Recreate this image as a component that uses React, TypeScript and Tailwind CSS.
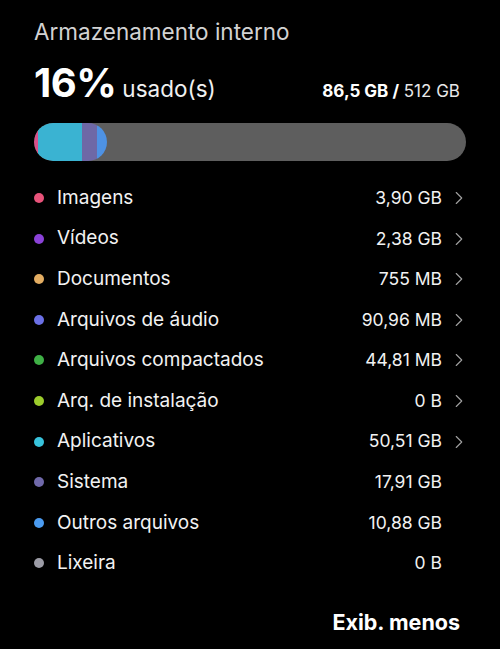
import { ChevronRight } from 'lucide-react';

interface Row {
    label: string;
    value: string;
    dot: string;
    chevron: boolean;
}

const rows: Row[] = [
    { label: 'Imagens', value: '3,90 GB', dot: 'bg-[#e8537a]', chevron: true },
    { label: 'Vídeos', value: '2,38 GB', dot: 'bg-[#8b42d8]', chevron: true },
    { label: 'Documentos', value: '755 MB', dot: 'bg-[#e3ad62]', chevron: true },
    { label: 'Arquivos de áudio', value: '90,96 MB', dot: 'bg-[#6b70e6]', chevron: true },
    { label: 'Arquivos compactados', value: '44,81 MB', dot: 'bg-[#3fb046]', chevron: true },
    { label: 'Arq. de instalação', value: '0 B', dot: 'bg-[#9ccc2c]', chevron: true },
    { label: 'Aplicativos', value: '50,51 GB', dot: 'bg-[#38c3dc]', chevron: true },
    { label: 'Sistema', value: '17,91 GB', dot: 'bg-[#7069aa]', chevron: false },
    { label: 'Outros arquivos', value: '10,88 GB', dot: 'bg-[#4b9bf0]', chevron: false },
    { label: 'Lixeira', value: '0 B', dot: 'bg-[#9c9ca6]', chevron: false },
];

export default function App() {
    return (
        <div className="w-[500px] h-[649px] bg-black text-white font-['Inter',sans-serif] px-[34px] pt-[16px]">
            {/* Header */}
            <h1 className="text-[22.5px] text-[#d2d2d2] leading-[32px]">Armazenamento interno</h1>
            <div className="flex items-baseline justify-between mt-[15px]">
                <div className="flex items-baseline gap-[6px]">
                    <span className="text-[40px] font-bold leading-[40px] tracking-[-0.5px]">16%</span>
                    <span className="text-[22.5px] text-[#f0f0f0]">usado(s)</span>
                </div>
                <div className="text-[17px] pr-[6px]">
                    <span className="font-bold">86,5 GB /</span> <span className="text-[#e8e8e8]">512 GB</span>
                </div>
            </div>

            {/* Usage bar */}
            <div className="mt-[17px] h-[38px] w-[432px] rounded-full bg-[#5e5e5e] overflow-hidden">
                <div className="flex h-full w-[73px] rounded-full overflow-hidden">
                    <div className="w-[4px] bg-[#d9508a]" />
                    <div className="w-[44px] bg-[#3ab3d2]" />
                    <div className="w-[15px] bg-[#6e68a6]" />
                    <div className="w-[10px] bg-[#4e92e4]" />
                </div>
            </div>

            {/* Categories */}
            <ul className="mt-[17px]">
                {rows.map((row) => (
                    <li key={row.label} className="flex items-center h-[40.6px]">
                        <span className={`w-[10px] h-[10px] rounded-full ${row.dot}`} />
                        <span className="ml-[13px] text-[19px] text-[#f2f2f2]">{row.label}</span>
                        <span className="ml-auto text-[17.5px] text-[#f2f2f2]">{row.value}</span>
                        <span className="w-[24px] flex justify-end">
                            {row.chevron && <ChevronRight className="w-[22px] h-[22px] -mr-[4px] text-[#a0a0a0]" strokeWidth={1.2} />}
                        </span>
                    </li>
                ))}
            </ul>

            <div className="flex justify-end mt-[22px] pr-[6px]">
                <button className="text-[21.5px] font-bold">Exib. menos</button>
            </div>
        </div>
    );
}
